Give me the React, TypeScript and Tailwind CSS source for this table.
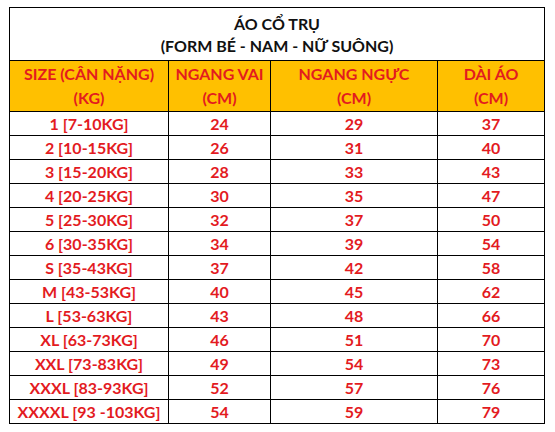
import React from "react";

const rows: [string, number, number, number][] = [
  ["1 [7-10KG]", 24, 29, 37],
  ["2 [10-15KG]", 26, 31, 40],
  ["3 [15-20KG]", 28, 33, 43],
  ["4 [20-25KG]", 30, 35, 47],
  ["5 [25-30KG]", 32, 37, 50],
  ["6 [30-35KG]", 34, 39, 54],
  ["S [35-43KG]", 37, 42, 58],
  ["M [43-53KG]", 40, 45, 62],
  ["L [53-63KG]", 43, 48, 66],
  ["XL [63-73KG]", 46, 51, 70],
  ["XXL [73-83KG]", 49, 54, 73],
  ["XXXL [83-93KG]", 52, 57, 76],
  ["XXXXL [93 -103KG]", 54, 59, 79],
];

export default function App() {
  return (
    <div
      className="w-[555px] h-[432px] bg-white overflow-hidden pt-[7px] pl-[9px]"
      style={{ fontFamily: "Lato, 'Open Sans', sans-serif" }}
    >
      <table className="border-collapse border-[1.5px] border-black font-bold text-[16px] leading-none">
        <colgroup>
          <col className="w-[159px]" />
          <col className="w-[102px]" />
          <col className="w-[167px]" />
          <col className="w-[107px]" />
        </colgroup>
        <tbody>
          <tr className="h-[53px] bg-white">
            <td colSpan={4} className="border border-black text-center text-[#111] p-0">
              <div className="leading-[22px] pt-[2px]">ÁO CỔ TRỤ</div>
              <div className="leading-[22px]">(FORM BÉ - NAM - NỮ SUÔNG)</div>
            </td>
          </tr>
          <tr className="h-[51px] bg-[#ffc000] text-[#e31b1f]">
            <td className="border border-black text-center p-0">
              <div className="leading-[24px]">SIZE (CÂN NẶNG)</div>
              <div className="leading-[24px]">(KG)</div>
            </td>
            <td className="border border-black text-center p-0">
              <div className="leading-[24px]">NGANG VAI</div>
              <div className="leading-[24px]">(CM)</div>
            </td>
            <td className="border border-black text-center p-0">
              <div className="leading-[24px]">NGANG NGỰC</div>
              <div className="leading-[24px]">(CM)</div>
            </td>
            <td className="border border-black text-center p-0">
              <div className="leading-[24px]">DÀI ÁO</div>
              <div className="leading-[24px]">(CM)</div>
            </td>
          </tr>
          {rows.map((r) => (
            <tr key={r[0]} className="h-[24px] bg-white text-[#e31b1f]">
              <td className="border border-black text-center p-0">{r[0]}</td>
              <td className="border border-black text-center p-0">{r[1]}</td>
              <td className="border border-black text-center p-0">{r[2]}</td>
              <td className="border border-black text-center p-0">{r[3]}</td>
            </tr>
          ))}
        </tbody>
      </table>
    </div>
  );
}
